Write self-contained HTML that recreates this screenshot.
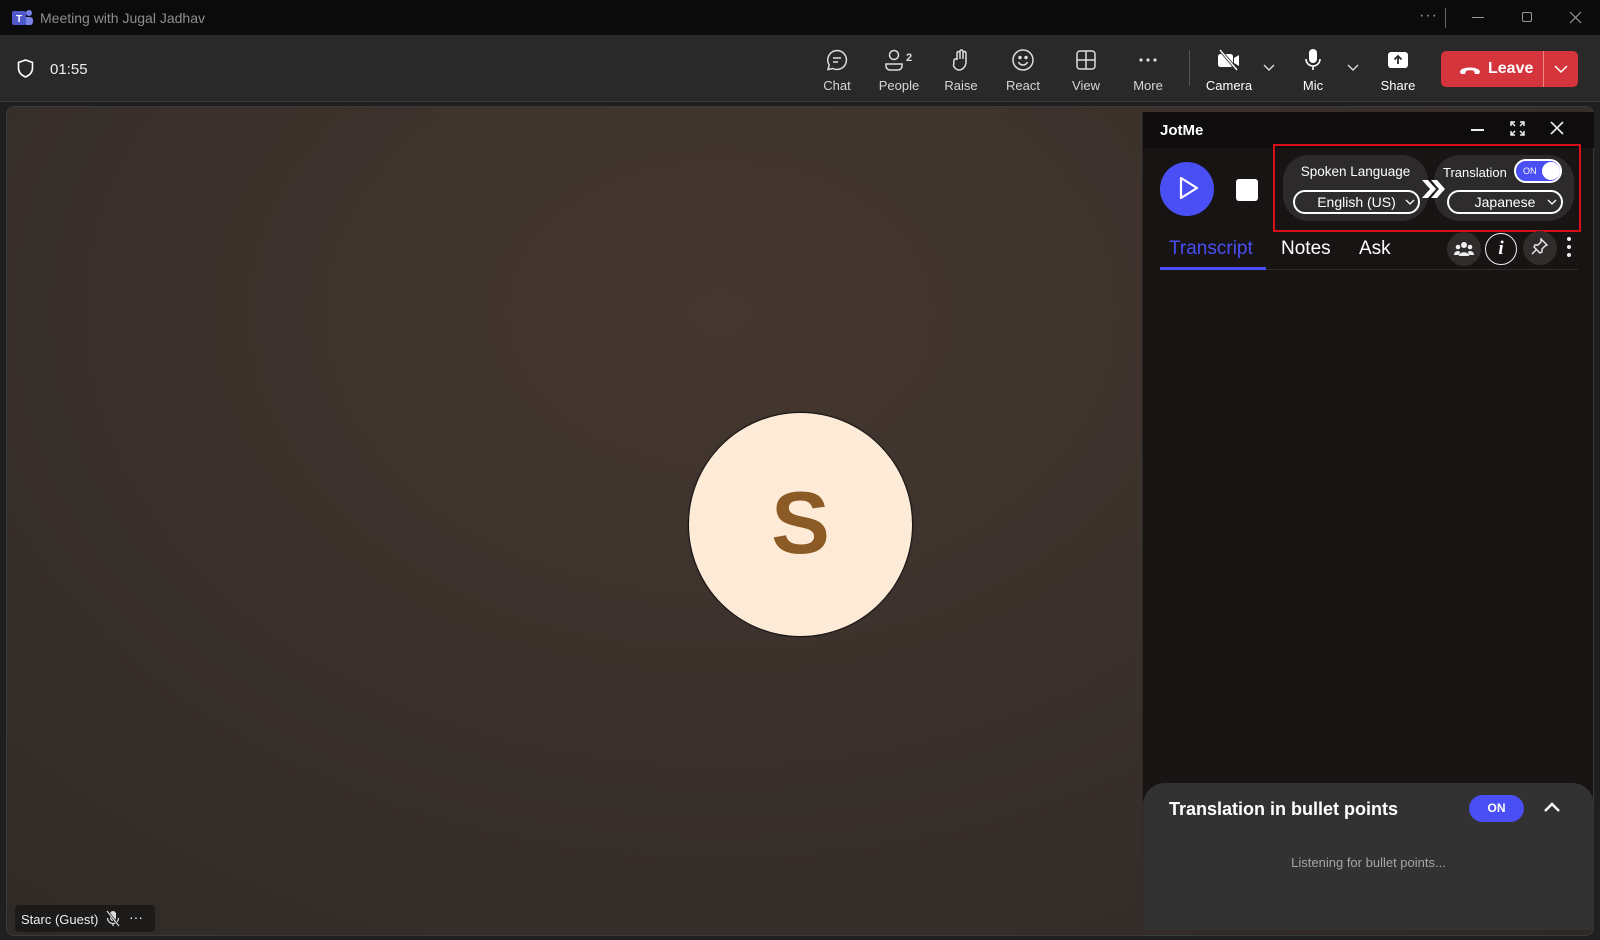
<!DOCTYPE html>
<html><head><meta charset="utf-8"><style>
*{box-sizing:border-box;margin:0;padding:0}
body{width:1600px;height:940px;overflow:hidden;background:#1f1f1f;font-family:"Liberation Sans",sans-serif;color:#fff;position:relative}
.abs{position:absolute}
.title{left:0;top:0;width:1600px;height:35px;background:#0b0b0b}
.tool{left:0;top:35px;width:1600px;height:67px;background:#292929;border-bottom:1px solid #3a3a3a}
.ti{position:absolute;top:13px;width:60px;text-align:center;font-size:13px;color:#d6d6d6}
.ti svg{display:block;margin:0 auto 6px}
.ti span{display:block}
.stage{left:6px;top:106px;width:1588px;height:830px;border-radius:8px;border:1px solid #3a3a3a;background:radial-gradient(ellipse at 45% 25%,#45372f 0%,#3b312c 45%,#2e2926 100%)}
.panel{left:1142px;top:112px;width:451px;height:818px;background:#171413;border-left:1px solid #2a2624}
.pill{position:absolute;background:#2c2a2a;border-radius:26px}
.dd{position:absolute;border:2px solid #fff;border-radius:14px;height:24px;font-size:14px;text-align:center;line-height:20px;background:#2e2c2c}
.icirc{position:absolute;width:34px;height:34px;border-radius:50%;background:#2f2c2b}
</style></head><body>
<div class="abs title">
  <svg class="abs" style="left:12px;top:9px" width="22" height="18" viewBox="0 0 22 18"><circle cx="17" cy="4" r="3" fill="#7b83eb"/><rect x="12" y="8" width="9" height="8" rx="3" fill="#7b83eb"/><rect x="0" y="2" width="14" height="14" rx="2" fill="#5059c9"/><text x="7" y="13" font-size="10" font-weight="bold" fill="#fff" text-anchor="middle" font-family="Liberation Sans">T</text></svg>
  <div class="abs" style="left:40px;top:10px;font-size:14px;color:#8d8d8d">Meeting with Jugal Jadhav</div>
  <div class="abs" style="left:1419px;top:7px;font-size:16px;color:#999;letter-spacing:1px">···</div>
  <div class="abs" style="left:1445px;top:8px;width:1px;height:20px;background:#666"></div>
  <div class="abs" style="left:1472px;top:17px;width:12px;height:1px;background:#999"></div>
  <div class="abs" style="left:1522px;top:12px;width:10px;height:10px;border:1px solid #999;border-radius:2px"></div>
  <svg class="abs" style="left:1569px;top:11px" width="13" height="13" viewBox="0 0 13 13" stroke="#999" stroke-width="1.2"><path d="M1 1l11 11M12 1L1 12"/></svg>
</div>
<div class="abs tool">
  <svg class="abs" style="left:17px;top:24px" width="17" height="19" viewBox="0 0 17 19"><path d="M8.5 1 L15.5 3.5 V9 C15.5 13.5 12 16.5 8.5 18 C5 16.5 1.5 13.5 1.5 9 V3.5 Z" fill="none" stroke="#fff" stroke-width="1.6"/></svg>
  <div class="abs" style="left:50px;top:26px;font-size:15px;color:#eee">01:55</div>

  <div class="ti" style="left:807px"><svg width="24" height="24" viewBox="0 0 24 24" fill="none" stroke="#ddd" stroke-width="1.5"><path d="M12 2.5a9.5 9.5 0 1 1-4.3 18L3 21.5l1.2-4.5A9.5 9.5 0 0 1 12 2.5z"/><path d="M8 10h8M8 14h5"/></svg><span>Chat</span></div>
  <div class="ti" style="left:869px"><svg width="30" height="24" viewBox="0 0 30 24" fill="none" stroke="#ddd" stroke-width="1.5"><circle cx="10" cy="7" r="4.5"/><path d="M2 16h16v2a4 4 0 0 1-4 4H6a4 4 0 0 1-4-4z"/><text x="22" y="13" font-size="11" font-weight="bold" fill="#ddd" stroke="none" font-family="Liberation Sans">2</text></svg><span>People</span></div>
  <div class="ti" style="left:931px"><svg width="24" height="24" viewBox="0 0 24 24" fill="none" stroke="#ddd" stroke-width="1.5"><path d="M8 12V5a1.5 1.5 0 0 1 3 0v6V3.5a1.5 1.5 0 0 1 3 0V11V5a1.5 1.5 0 0 1 3 0v9c0 4-3 8-7 8-2.5 0-4-1.5-5.5-4L5 13a1.5 1.5 0 0 1 3-1z"/></svg><span>Raise</span></div>
  <div class="ti" style="left:993px"><svg width="24" height="24" viewBox="0 0 24 24" fill="none" stroke="#ddd" stroke-width="1.5"><circle cx="12" cy="12" r="10"/><path d="M7.5 14c1 2 2.5 3 4.5 3s3.5-1 4.5-3"/><circle cx="9" cy="9.5" r="1" fill="#ddd"/><circle cx="15" cy="9.5" r="1" fill="#ddd"/></svg><span>React</span></div>
  <div class="ti" style="left:1056px"><svg width="24" height="24" viewBox="0 0 24 24" fill="none" stroke="#ddd" stroke-width="1.5"><rect x="3" y="3" width="18" height="18" rx="3"/><path d="M12 3v18M3 12h18"/></svg><span>View</span></div>
  <div class="ti" style="left:1118px"><svg width="24" height="24" viewBox="0 0 24 24" fill="#ddd"><circle cx="5" cy="12" r="1.6"/><circle cx="12" cy="12" r="1.6"/><circle cx="19" cy="12" r="1.6"/></svg><span>More</span></div>
  <div class="abs" style="left:1189px;top:15px;width:1px;height:36px;background:#555"></div>
  <div class="ti" style="left:1199px;color:#fff"><svg width="26" height="24" viewBox="0 0 26 24"><rect x="2" y="6" width="15" height="13" rx="2.5" fill="#fff"/><path d="M18 10l5-3v11l-5-3z" fill="#fff"/><path d="M4 2l17 20" stroke="#292929" stroke-width="3"/><path d="M4 2l17 20" stroke="#fff" stroke-width="1.4"/></svg><span>Camera</span></div>
  <svg class="abs" style="left:1263px;top:29px" width="12" height="8" viewBox="0 0 12 8"><path d="M1 1l5 5 5-5" fill="none" stroke="#ddd" stroke-width="1.4"/></svg>
  <div class="ti" style="left:1283px;color:#fff"><svg width="24" height="24" viewBox="0 0 24 24"><rect x="8" y="1" width="8" height="14" rx="4" fill="#fff"/><path d="M5 11a7 7 0 0 0 14 0M12 18v4" fill="none" stroke="#fff" stroke-width="1.6"/></svg><span>Mic</span></div>
  <svg class="abs" style="left:1347px;top:29px" width="12" height="8" viewBox="0 0 12 8"><path d="M1 1l5 5 5-5" fill="none" stroke="#ddd" stroke-width="1.4"/></svg>
  <div class="ti" style="left:1368px;color:#fff"><svg width="24" height="24" viewBox="0 0 24 24"><rect x="2" y="4" width="20" height="16" rx="3" fill="#fff"/><path d="M12 16V8M8.5 11.5L12 8l3.5 3.5" fill="none" stroke="#292929" stroke-width="1.8"/></svg><span>Share</span></div>
  <div class="abs" style="left:1441px;top:16px;width:137px;height:36px;background:#d4343b;border-radius:5px">
    <svg class="abs" style="left:17px;top:12px" width="24" height="12" viewBox="0 0 24 12"><path d="M2 9c0-6 20-6 20 0l-1 2h-4l-1-3c-3-1-5-1-8 0l-1 3H3z" fill="#fff"/></svg>
    <div class="abs" style="left:47px;top:9px;font-size:16px;font-weight:bold">Leave</div>
    <div class="abs" style="left:102px;top:0;width:1px;height:36px;background:#e88"></div>
    <svg class="abs" style="left:113px;top:14px" width="14" height="9" viewBox="0 0 14 9"><path d="M1 1l6 6 6-6" fill="none" stroke="#fff" stroke-width="1.5"/></svg>
  </div>
</div>

<div class="abs stage"></div>
<div class="abs" style="left:689px;top:413px;width:223px;height:223px;border-radius:50%;background:#fdebd8;box-shadow:0 0 1px 1px #111;text-align:center;line-height:220px;font-size:88px;font-weight:bold;color:#8c5a24">S</div>

<div class="abs" style="left:15px;top:905px;width:140px;height:27px;background:#1d1b1a;border-radius:4px">
  <div class="abs" style="left:6px;top:7px;font-size:13px;color:#eee">Starc (Guest)</div>
  <svg class="abs" style="left:90px;top:5px" width="16" height="17" viewBox="0 0 16 17"><rect x="5" y="1" width="6" height="10" rx="3" fill="#ddd"/><path d="M2.5 8a5.5 5.5 0 0 0 11 0M8 13.5v2.5" fill="none" stroke="#ddd" stroke-width="1.2"/><path d="M2 1l12 15" stroke="#1d1b1a" stroke-width="2.5"/><path d="M2 1l12 15" stroke="#ddd" stroke-width="1.2"/></svg>
  <div class="abs" style="left:114px;top:4px;font-size:14px;color:#eee">···</div>
</div>

<div class="abs panel">
  <div class="abs" style="left:0;top:0;width:451px;height:36px;background:#0e0c0c"></div>
  <div class="abs" style="left:17px;top:10px;font-size:15px;font-weight:bold">JotMe</div>
  <div class="abs" style="left:328px;top:17px;width:13px;height:1.5px;background:#eee"></div>
  <svg class="abs" style="left:367px;top:9px" width="15" height="15" viewBox="0 0 15 15" fill="none" stroke="#eee" stroke-width="1.5"><path d="M1 5V1h4M10 1h4v4M14 10v4h-4M5 14H1v-4M1 1l4 4M14 1l-4 4M14 14l-4-4M1 14l4-4"/></svg>
  <svg class="abs" style="left:407px;top:9px" width="14" height="14" viewBox="0 0 14 14" stroke="#eee" stroke-width="1.6"><path d="M1 1l12 12M13 1L1 13"/></svg>

  <div class="abs" style="left:17px;top:50px;width:54px;height:54px;border-radius:50%;background:#4a4ef5"></div>
  <svg class="abs" style="left:36px;top:64px" width="20" height="24" viewBox="0 0 20 24"><path d="M2 2l16 10L2 22z" fill="none" stroke="#fff" stroke-width="2.2" stroke-linejoin="round"/></svg>
  <div class="abs" style="left:93px;top:67px;width:22px;height:22px;background:#fff;border-radius:3px"></div>

  <div class="abs" style="left:130px;top:32px;width:308px;height:88px;border:2px solid #d8101a"></div>
  <div class="pill" style="left:140px;top:43px;width:145px;height:66px"></div>
  <div class="abs" style="left:140px;top:52px;width:145px;text-align:center;font-size:13.5px">Spoken Language</div>
  <div class="dd" style="left:150px;top:78px;width:127px">English (US)</div>
  <svg class="abs" style="left:262px;top:87px" width="10" height="6" viewBox="0 0 10 6"><path d="M1 1l4 4 4-4" fill="none" stroke="#fff" stroke-width="1.3"/></svg>
  <div class="pill" style="left:291px;top:43px;width:140px;height:66px"></div>
  <svg class="abs" style="left:278px;top:67px" width="26" height="20" viewBox="0 0 26 20" fill="#fff"><path d="M1 1h6l8 9-8 9H1l8-9z"/><path d="M10 1h6l8 9-8 9h-6l8-9z"/></svg>
  <div class="abs" style="left:300px;top:53px;font-size:13px">Translation</div>
  <div class="abs" style="left:371px;top:47px;width:48px;height:24px;border-radius:12px;background:#4a4ef5;border:2px solid #fff">
    <div class="abs" style="left:7px;top:5px;font-size:9px">ON</div>
    <div class="abs" style="left:26px;top:1px;width:18px;height:18px;border-radius:50%;background:#fff"></div>
  </div>
  <div class="dd" style="left:304px;top:78px;width:116px">Japanese</div>
  <svg class="abs" style="left:404px;top:87px" width="10" height="6" viewBox="0 0 10 6"><path d="M1 1l4 4 4-4" fill="none" stroke="#fff" stroke-width="1.3"/></svg>

  <div class="abs" style="left:26px;top:126px;font-size:19px;color:#4a4ef5">Transcript</div>
  <div class="abs" style="left:138px;top:126px;font-size:19px">Notes</div>
  <div class="abs" style="left:216px;top:126px;font-size:19px">Ask</div>
  <div class="abs" style="left:17px;top:155px;width:106px;height:3px;background:#4a4ef5"></div>
  <div class="abs" style="left:123px;top:157px;width:312px;height:1px;background:#2e2b2a"></div>
  <div class="icirc" style="left:304px;top:120px"></div>
  <svg class="abs" style="left:311px;top:128px" width="20" height="18" viewBox="0 0 20 18" fill="#eee"><circle cx="10" cy="5" r="3"/><circle cx="4" cy="7" r="2.3"/><circle cx="16" cy="7" r="2.3"/><path d="M5 16c0-5 10-5 10 0z"/><path d="M0 15c0-4 5-5 6-3l-1 3zM20 15c0-4-5-5-6-3l1 3z"/></svg>
  <div class="abs" style="left:342px;top:121px;width:32px;height:32px;border-radius:50%;border:1.5px solid #eee;text-align:center;font:italic bold 19px 'Liberation Serif',serif;line-height:29px">i</div>
  <div class="icirc" style="left:380px;top:119px"></div>
  <svg class="abs" style="left:388px;top:126px" width="17" height="17" viewBox="0 0 17 17" fill="none" stroke="#eee" stroke-width="1.4"><path d="M10 1l6 6-2 1-3 3 0 3-2 1-6-6 1-2 3 0 3-3z"/><path d="M5 12l-4 4"/></svg>
  <div class="abs" style="left:424px;top:125px;width:4px;height:4px;border-radius:2px;background:#eee;box-shadow:0 8px 0 #eee,0 16px 0 #eee"></div>

  <div class="abs" style="left:0;top:671px;width:451px;height:147px;background:#333232;border-radius:22px 22px 0 0"></div>
  <div class="abs" style="left:26px;top:687px;font-size:18px;font-weight:bold">Translation in bullet points</div>
  <div class="abs" style="left:326px;top:683px;width:55px;height:27px;border-radius:14px;background:#4a4ef5;text-align:center;line-height:27px;font-size:12px;font-weight:bold">ON</div>
  <svg class="abs" style="left:400px;top:690px" width="18" height="11" viewBox="0 0 18 11"><path d="M2 9l7-7 7 7" fill="none" stroke="#fff" stroke-width="2.4"/></svg>
  <div class="abs" style="left:0;top:743px;width:451px;text-align:center;font-size:13px;color:#a5a5a5">Listening for bullet points...</div>
</div>
</body></html>
